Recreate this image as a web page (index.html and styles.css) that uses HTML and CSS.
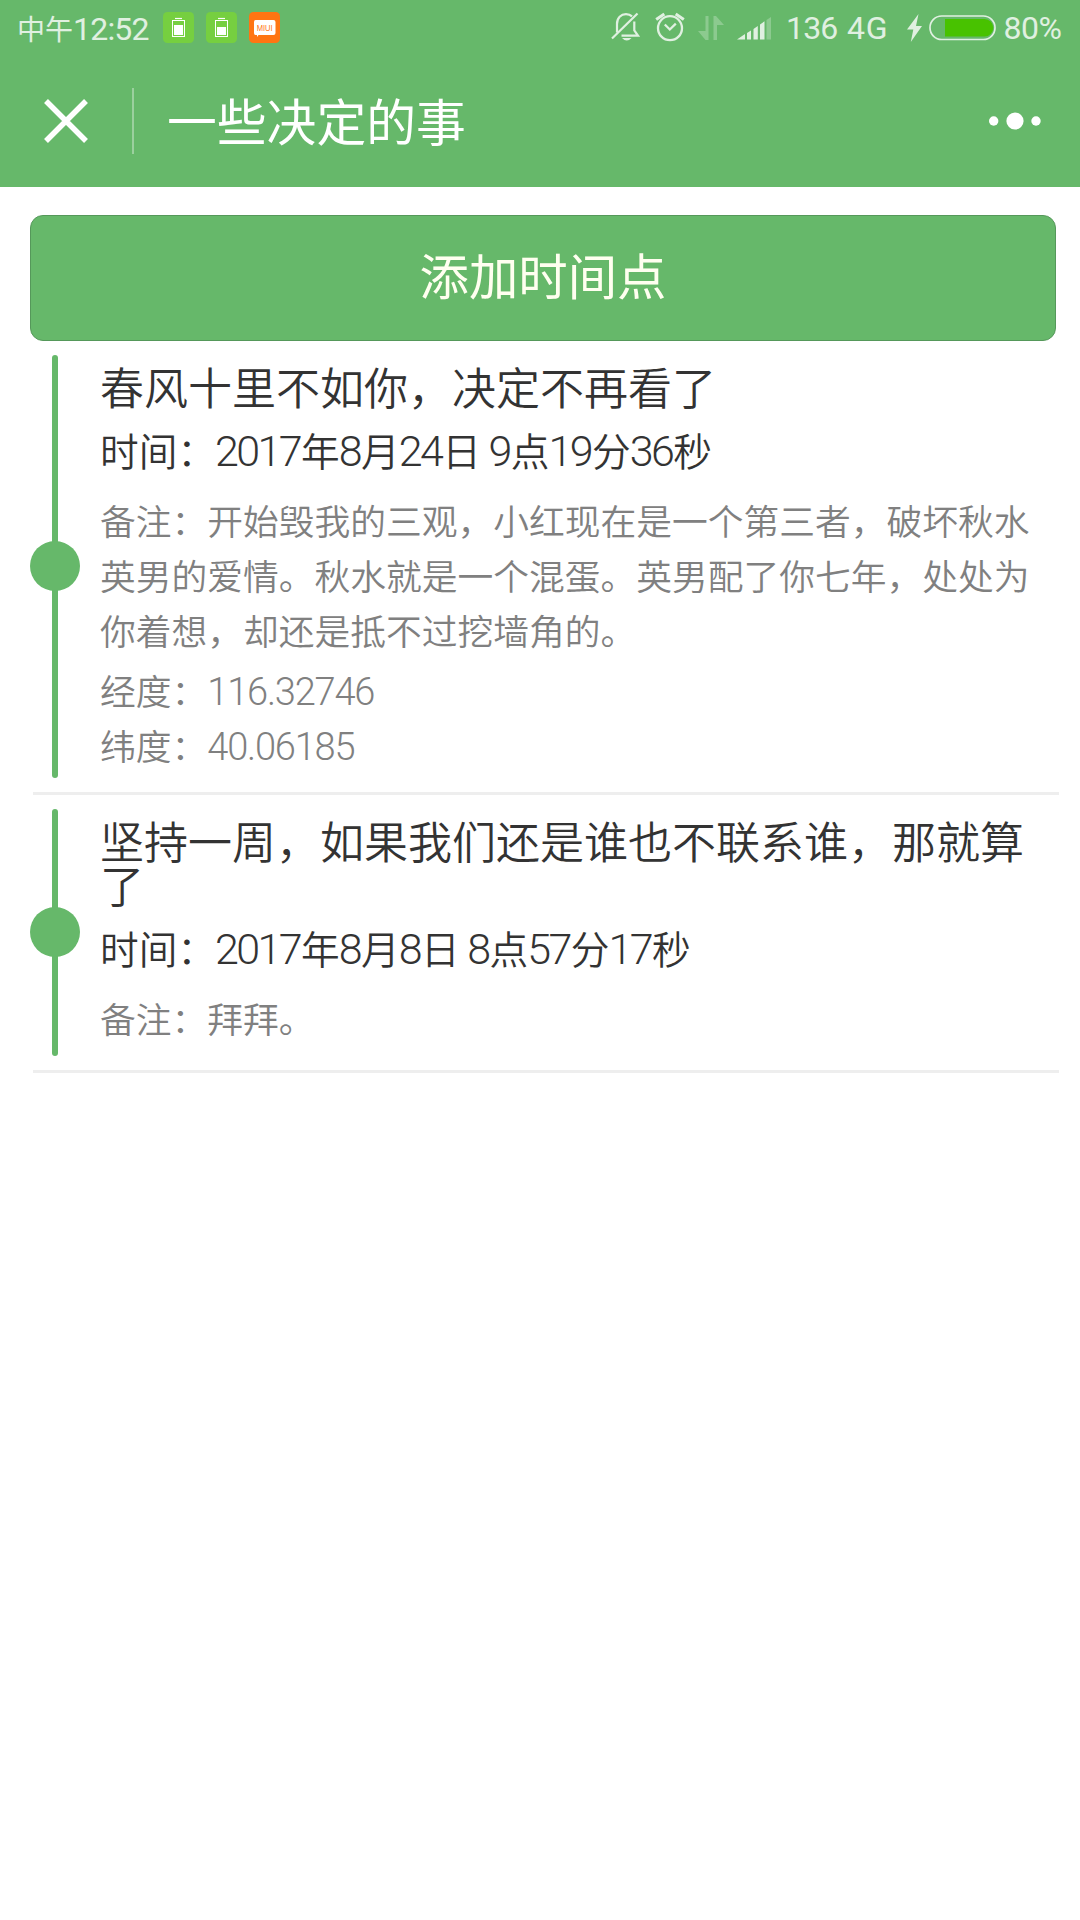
FILE: index.html
```html
<!DOCTYPE html>
<html lang="zh-CN">
<head>
<meta charset="utf-8">
<title>一些决定的事</title>
<link rel="stylesheet" href="styles.css">
</head>
<body>
<header class="top">
  <div class="status">
    <div class="clock">中午<span class="clock-num">12:52</span></div>
    <div class="apps">
      <svg width="31" height="31" viewBox="0 0 31 31"><rect width="31" height="31" rx="4.5" fill="#76cf40"/><path d="M12 6.5h7" stroke="#fff" stroke-width="1.2"/><rect x="9.500" y="8.500" width="12" height="16" fill="none" stroke="#fff"/><path d="M11 13h9v10h-9z" fill="#fff"/></svg>
      <svg width="31" height="31" viewBox="0 0 31 31"><rect width="31" height="31" rx="4.5" fill="#76cf40"/><path d="M12 6.5h7" stroke="#fff" stroke-width="1.2"/><rect x="9.500" y="8.500" width="12" height="16" fill="none" stroke="#fff"/><path d="M11 15h9v8h-9z" fill="#fff"/></svg>
      <svg width="31" height="31" viewBox="0 0 31 31"><rect width="31" height="31" rx="4.5" fill="#ff7512"/><path d="M6.500 8h18q2 0 2 2v11q0 2-2 2H9.500l-1.500 2v-2H6.500q-1.500 0-1.500-2V10q0-2 1.500-2z" fill="#fff"/><text class="miui" x="15.700" y="19" text-anchor="middle" textLength="16" lengthAdjust="spacingAndGlyphs">MIUI</text></svg>
    </div>
    <svg class="bell" width="30" height="30" viewBox="0 0 30 30" fill="none" stroke="#e0f0e1" stroke-width="2.200"><path d="M6 20.500V12C6 6 10 2.200 15 2.200c2.500 0 4.500.7 6 2.200M23.300 9.500v9l3.700 5.200H10.500"/><path d="M1 26.500 26.500 1.500"/><path d="M11 26h9.500q-4.700 5-9.500 0z" fill="#e0f0e1" stroke="none"/></svg>
    <svg class="alarm" width="30" height="30" viewBox="0 0 30 30" fill="none" stroke="#e0f0e1" stroke-width="2.300"><circle cx="15" cy="16.200" r="12"/><path d="m9.800 12.500 5 5 6-5.800"/><path d="M1.200 7.600 9.300 2M28.800 7.600 20.700 2" stroke-width="3"/></svg>
    <svg class="data" width="26" height="25" viewBox="0 0 26 25" fill="#8cca8f"><path d="M7.500 0h3v24h-3L0 15h7.500zM15.500 0h2.500l8 9h-7v15h-3.500z"/></svg>
    <svg class="signal" width="34" height="24" viewBox="0 0 34 24" fill="#e0f0e1"><path d="M0 22.500 8 17v5.500zM10 16l4-2.500v9h-4zM16.500 12l4.300-3v13.500h-4.300zM23 7.500l4.500-3.200v18.200H23z"/><path d="M29.500 3 34 0v22.500h-4.500z" fill="#8cca8f"/></svg>
    <span class="carrier">136</span>
    <span class="network">4G</span>
    <svg class="bolt" width="15" height="28" viewBox="0 0 15 28" fill="#e0f0e1"><path d="M11.500 0 0 15.500h6.300L3.800 28 15 12H9z"/></svg>
    <svg class="battery" width="67" height="26" viewBox="0 0 67 26"><rect x="1" y="1" width="65" height="23.500" rx="11.700" fill="none" stroke="#e0f0e1" stroke-width="1.700"/><path d="M16 4h39.500a8.700 8.700 0 0 1 0 17.500H16z" fill="#48c200"/></svg>
    <span class="percent">80%</span>
  </div>
  <nav class="bar">
    <svg class="close" width="44" height="44" viewBox="0 0 44 44" stroke="#fff" stroke-width="5.500"><path d="m2 2 40 40M42 2 2 42"/></svg>
    <span class="sep"></span>
    <h1 class="title">一些决定的事</h1>
    <svg class="more" width="52" height="18" viewBox="0 0 52 18" fill="#fff"><circle cx="4.700" cy="9" r="4.700"/><circle cx="26" cy="9" r="8.600"/><circle cx="47" cy="9" r="4.700"/></svg>
  </nav>
</header>
<main>
  <button class="add">添加时间点</button>
  <ul class="timeline">
    <li class="event">
      <span class="rail"><i class="dot"></i></span>
      <div class="body">
        <h2 class="name">春风十里不如你，决定不再看了</h2>
        <p class="time">时间：<span class="num">2017</span>年<span class="num">8</span>月<span class="num">24</span>日 <span class="num">9</span>点<span class="num">19</span>分<span class="num">36</span>秒</p>
        <p class="note">备注：开始毁我的三观，小红现在是一个第三者，破坏秋水英男的爱情。秋水就是一个混蛋。英男配了你七年，处处为你着想，却还是抵不过挖墙角的。</p>
        <p class="place">经度：<span class="num">116.32746</span></p>
        <p class="place">纬度：<span class="num">40.06185</span></p>
      </div>
    </li>
    <li class="event">
      <span class="rail"><i class="dot"></i></span>
      <div class="body">
        <h2 class="name">坚持一周，如果我们还是谁也不联系谁，那就算了</h2>
        <p class="time">时间：<span class="num">2017</span>年<span class="num">8</span>月<span class="num">8</span>日 <span class="num">8</span>点<span class="num">57</span>分<span class="num">17</span>秒</p>
        <p class="note">备注：拜拜。</p>
      </div>
    </li>
  </ul>
</main>
</body>
</html>
```
FILE: styles.css
```css
* { box-sizing: border-box; margin: 0; padding: 0; }
body {
  background: #fff;
  color: #333;
  font-family: "Noto Sans CJK SC", sans-serif;
  font-weight: 350;
}
svg { display: block; flex: none; }
.top { height: 187px; background: #66b86a; }

.status {
  display: flex;
  align-items: flex-start;
  height: 56px;
  padding-left: 17px;
  color: #e0f0e1;
  font-size: 28px;
  font-weight: 400;
  line-height: 56px;
  white-space: nowrap;
}
.clock { width: 146px; }
.clock-num, .carrier, .network, .percent {
  font-family: Roboto, sans-serif;
  font-size: 32px;
  font-weight: 400;
  letter-spacing: -0.800px;
}
.apps { display: flex; gap: 12px; margin-top: 12px; }
.miui { font: 400 9.500px "Liberation Sans", sans-serif; fill: #ff7512; }
.bell { margin: 12px 0 0 331px; }
.alarm { margin: 12px 0 0 14px; }
.data { margin: 16px 0 0 13px; }
.signal { margin: 17px 0 0 13px; }
.carrier { width: 61px; margin-left: 15px; }
.network { width: 60px; letter-spacing: 0.800px; }
.bolt { margin-top: 14px; }
.battery { margin: 15px 0 0 6.500px; }
.percent { margin-left: 8px; letter-spacing: -0.500px; }

.bar { display: flex; align-items: center; height: 131px; padding: 0 39px 2px 44px; }
.sep { width: 2px; height: 66px; margin-left: 44px; background: #9bd09e; }
.title {
  margin-left: 33px;
  padding-bottom: 3px;
  color: #fff;
  font-size: 49.800px;
  font-weight: 400;
  line-height: 66px;
}
.more { margin-left: auto; }

.add {
  display: block;
  width: 1026px;
  height: 126px;
  margin: 28px 0 0 30px;
  padding-bottom: 9px;
  border: 1px solid #55985a;
  border-radius: 13px;
  background: #66b86a;
  color: #fffff0;
  font: 400 49.400px/110px "Noto Sans CJK SC", sans-serif;
}
.timeline { list-style: none; padding: 0 21px 0 33px; }
.event {
  display: flex;
  padding: 14px 0;
  border-bottom: 3px solid #eee;
}
.event:first-child { padding-top: 13.500px; }
.rail {
  display: flex;
  align-items: center;
  justify-content: center;
  width: 6px;
  margin-left: 19px;
  border-radius: 3px;
  background: #66b86a;
}
.dot { flex: none; width: 50px; height: 50px; border-radius: 50%; background: #66b86a; }
.body { width: 950px; margin-left: 42px; padding: 9px 0 6px; }
.name { font-size: 44px; font-weight: 350; line-height: 44px; }
.time { height: 44px; margin: 19px 0 21px; font-size: 38.700px; line-height: 44px; }
.note { margin-bottom: 5px; }
.note, .place { color: #808080; font-size: 35.750px; line-height: 55px; }
.place { height: 55px; }
.num { font-family: Roboto, sans-serif; font-weight: 300; }
.time .num { margin-left: -1px; margin-right: 1px; font-size: 43px; letter-spacing: -2.600px; }
.place .num { font-size: 38px; letter-spacing: -1.200px; }
```
